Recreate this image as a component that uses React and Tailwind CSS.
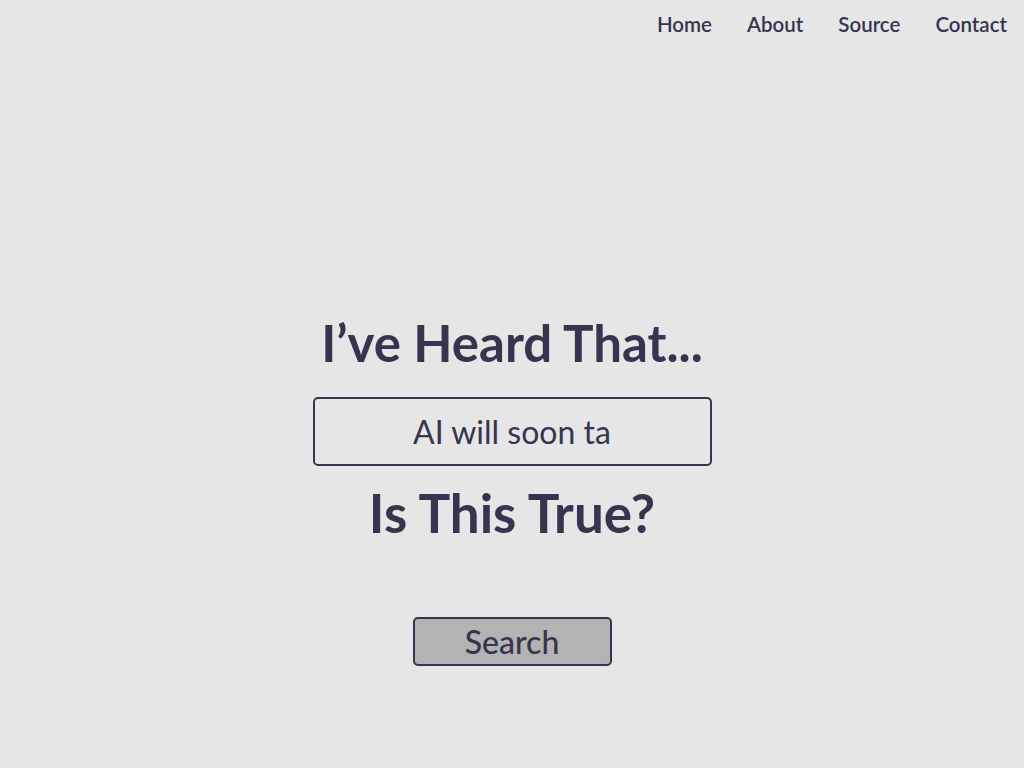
import React from "react";

const links = ["Home", "About", "Source", "Contact"];

export default function App() {
  return (
    <div
      className="min-h-screen bg-[#e6e6e6] text-[#37344f]"
      style={{ fontFamily: "Lato, 'Noto Sans', sans-serif" }}
    >
      <nav className="flex justify-end gap-[35px] pr-[17px] pt-[11px]">
        {links.map((l) => (
          <a key={l} href="#" className="text-[20.5px] font-semibold leading-[26px]">
            {l}
          </a>
        ))}
      </nav>

      <main className="flex flex-col items-center pt-[278px]">
        <h1 className="text-[51px] font-bold leading-[56px]">I’ve Heard That...</h1>
        <input
          type="text"
          defaultValue="AI will soon ta"
          className="mt-[26px] h-[69px] w-[399px] rounded-[5px] border-2 border-[#37344f] bg-transparent text-center text-[32px] text-[#37344f] outline-none"
        />
        <h2 className="mt-[19px] text-[53px] font-bold leading-[56px]">Is This True?</h2>
        <button className="mt-[76px] h-[49px] w-[199px] rounded-[5px] border-2 border-[#37344f] bg-[#b3b3b3] text-[32px] font-medium leading-none">
          Search
        </button>
      </main>
    </div>
  );
}
